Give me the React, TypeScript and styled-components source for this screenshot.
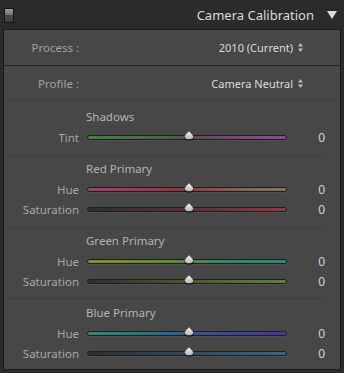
import React from "react";
import styled, { createGlobalStyle } from "styled-components";

const GlobalStyle = createGlobalStyle`
  html, body { margin: 0; padding: 0; background: #2b2b2b; }
  body { font-family: "Noto Sans", "Open Sans", sans-serif; }
`;

const Frame = styled.div`
  width: 344px;
  height: 373px;
  background: #2b2b2b;
  display: flex;
  flex-direction: column;
  box-sizing: border-box;
`;

const Header = styled.div`
  height: 29px;
  display: flex;
  align-items: center;
  padding: 0 7px 0 4px;
  flex-shrink: 0;
`;

const Switch = styled.div`
  width: 8px;
  height: 13px;
  border: 1px solid #141414;
  background: linear-gradient(#9a9a9a 0%, #6e6e6e 50%, #4a4a4a 50%, #3e3e3e 100%);
  margin-top: 1px;
`;

const Title = styled.div`
  margin-left: auto;
  color: #dadada;
  font-size: 13px;
`;

const Collapse = styled.svg`
  margin-left: 13px;
  width: 10px;
  height: 8px;
  margin-top: 1px;
`;

const Panel = styled.div`
  flex: 1;
  margin: 0 3px 3px;
  border: 1px solid #191919;
  background: #474747;
  display: flex;
  flex-direction: column;
`;

const SelectRow = styled.div<{ $h: number; $line: string }>`
  height: ${(p) => p.$h}px;
  display: grid;
  grid-template-columns: 75px 1fr;
  align-items: center;
  padding-right: 37px;
  border-bottom: 1px solid ${(p) => p.$line};
`;

const SelectLabel = styled.div`
  color: #a2a2a2;
  font-size: 11.5px;
  text-align: right;
`;

const SelectValue = styled.div`
  color: #dcdcdc;
  font-size: 11px;
  display: flex;
  align-items: center;
  justify-content: flex-end;
  gap: 5px;
`;

const Divider = styled.div<{ $right: number }>`
  height: 1px;
  background: #3d3d3d;
  margin: 0 ${(p) => p.$right}px 0 3px;
`;

const Section = styled.div<{ $top: number; $bottom: number }>`
  padding: ${(p) => p.$top}px 0 ${(p) => p.$bottom}px;
`;

const SectionLabel = styled.div`
  height: 20px;
  line-height: 20px;
  padding-left: 82px;
  color: #b4b4b4;
  font-size: 11.5px;
`;

const SliderRow = styled.div`
  height: 20px;
  display: grid;
  grid-template-columns: 75px 200px 30px;
  column-gap: 8px;
  align-items: center;
`;

const SliderLabel = styled.div`
  color: #a6a6a6;
  font-size: 11.5px;
  text-align: right;
`;

const Track = styled.div<{ $grad: string }>`
  position: relative;
  height: 3px;
  border: 1px solid #1e1e1e;
  border-radius: 3px;
  background: ${(p) => p.$grad};
  box-shadow: 0 1px 0 rgba(255, 255, 255, 0.05);
`;

const Thumb = styled.svg`
  position: absolute;
  left: 96px;
  top: -6px;
  width: 10px;
  height: 10px;
  filter: drop-shadow(0 1px 0.5px rgba(0, 0, 0, 0.6));
`;

const Value = styled.div`
  color: #d2d2d2;
  font-size: 12px;
  text-align: right;
`;

const Stepper = () => (
  <svg width="5" height="9" viewBox="0 0 5 9">
    <polygon points="2.5,0 5,3.5 0,3.5" fill="#bdbdbd" />
    <polygon points="0,5.5 5,5.5 2.5,9" fill="#bdbdbd" />
  </svg>
);

const DARK = "#2f2f2f";

type Slider = { label: string; grad: string };
type Group = { title: string; top: number; bottom: number; sliders: Slider[] };

const groups: Group[] = [
  {
    title: "Shadows",
    top: 6,
    bottom: 8,
    sliders: [
      { label: "Tint", grad: "linear-gradient(90deg, #4e7a4a, #4a5a48 50%, #5a4a58 52%, #904c8a)" },
    ],
  },
  {
    title: "Red Primary",
    top: 3,
    bottom: 8,
    sliders: [
      { label: "Hue", grad: "linear-gradient(90deg, #904a72, #823c42 45%, #806858 80%, #82765e)" },
      { label: "Saturation", grad: `linear-gradient(90deg, ${DARK}, #533236 45%, #863c48)` },
    ],
  },
  {
    title: "Green Primary",
    top: 3,
    bottom: 7,
    sliders: [
      { label: "Hue", grad: "linear-gradient(90deg, #808c40, #5e8646 45%, #3e8066 75%, #3c8080)" },
      { label: "Saturation", grad: `linear-gradient(90deg, ${DARK}, #465432 45%, #627e3c)` },
    ],
  },
  {
    title: "Blue Primary",
    top: 4,
    bottom: 0,
    sliders: [
      { label: "Hue", grad: "linear-gradient(90deg, #3c8078, #3c5e80 45%, #3e4880 75%, #4a3c80)" },
      { label: "Saturation", grad: `linear-gradient(90deg, ${DARK}, #344656 45%, #3c6280)` },
    ],
  },
];

export default function App() {
  return (
    <>
      <GlobalStyle />
      <Frame>
        <Header>
          <Switch />
          <Title>Camera Calibration</Title>
          <Collapse viewBox="0 0 10 8">
            <polygon points="0,0 10,0 5,8" fill="#dcdcdc" />
          </Collapse>
        </Header>
        <Panel>
          <SelectRow $h={35} $line="#262626">
            <SelectLabel>Process :</SelectLabel>
            <SelectValue>
              2010 (Current) <Stepper />
            </SelectValue>
          </SelectRow>
          <SelectRow $h={34} $line="#3d3d3d">
            <SelectLabel>Profile :</SelectLabel>
            <SelectValue>
              Camera Neutral <Stepper />
            </SelectValue>
          </SelectRow>
          {groups.map((g, i) => (
            <React.Fragment key={g.title}>
              {i > 0 && <Divider $right={15} />}
              <Section $top={g.top} $bottom={g.bottom}>
                <SectionLabel>{g.title}</SectionLabel>
                {g.sliders.map((s) => (
                  <SliderRow key={s.label}>
                    <SliderLabel>{s.label}</SliderLabel>
                    <Track $grad={s.grad}>
                      <Thumb viewBox="0 0 10 10">
                        <defs>
                          <linearGradient id="tg" x1="0" y1="0" x2="0" y2="1">
                            <stop offset="0" stopColor="#f4f4f4" />
                            <stop offset="1" stopColor="#b8b8b8" />
                          </linearGradient>
                        </defs>
                        <path
                          d="M5 0.5 C6 2.5 9.5 4.5 9.5 6.8 C9.5 8.8 7.5 9.5 5 9.5 C2.5 9.5 0.5 8.8 0.5 6.8 C0.5 4.5 4 2.5 5 0.5 Z"
                          fill="url(#tg)"
                          stroke="#2a2a2a"
                          strokeWidth="0.6"
                        />
                      </Thumb>
                    </Track>
                    <Value>0</Value>
                  </SliderRow>
                ))}
              </Section>
            </React.Fragment>
          ))}
        </Panel>
      </Frame>
    </>
  );
}
